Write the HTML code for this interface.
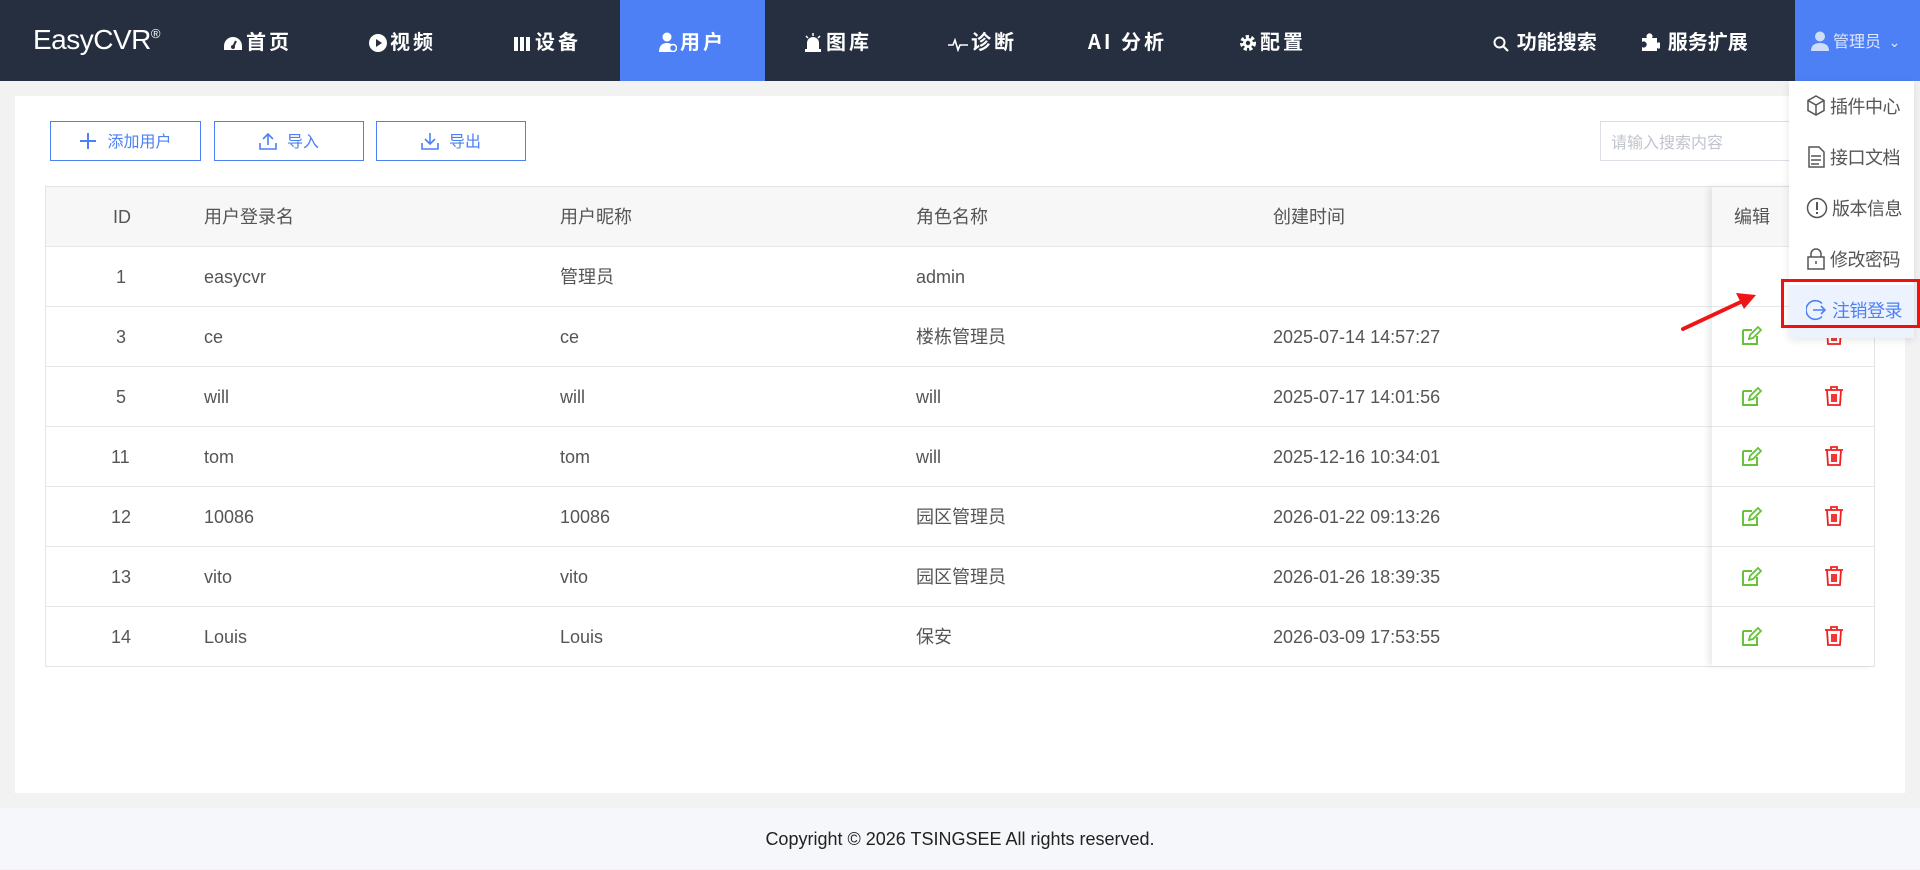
<!DOCTYPE html>
<html><head><meta charset="utf-8"><style>
*{margin:0;padding:0;box-sizing:border-box}
body{width:1920px;height:869px;overflow:hidden;background:#f2f2f2;font-family:"Liberation Sans","Noto Sans CJK SC",sans-serif;position:relative;color:#606266}
.hdr{position:absolute;left:0;top:0;width:1920px;height:81px;background:#262f3f}
.logo{position:absolute;left:33px;top:24px;color:#fff;font-size:28px;letter-spacing:-0.5px}
.logo sup{font-size:13px;vertical-align:top;position:relative;top:2px}
.tab{position:absolute;top:0;height:81px;width:145px;color:#fff;font-weight:bold;font-size:20px;line-height:81px;text-align:center;letter-spacing:3px;font-family:"Noto Sans CJK SC",sans-serif}
.tab.act{background:#4d80f5}
.tab svg{vertical-align:-3px;margin-right:3px}
.adm{position:absolute;left:1795px;top:0;width:125px;height:81px;background:#4d80f5;color:#dfe8ff;font-size:16px;line-height:81px;padding-left:16px;font-family:"Noto Sans CJK SC",sans-serif}
.panel{position:absolute;left:15px;top:96px;width:1890px;height:697px;background:#fff}
.btn{position:absolute;top:121px;height:40px;border:1.5px solid #4d80f5;color:#4d80f5;font-size:16px;line-height:37px;text-align:center;font-family:"Noto Sans CJK SC",sans-serif}
.btn svg{vertical-align:-3px;margin-right:10px}
.search{position:absolute;left:1600px;top:121px;width:300px;height:40px;border:1px solid #dcdfe6;color:#c0c4cc;font-size:16px;line-height:38px;padding-left:10px;font-family:"Noto Sans CJK SC",sans-serif}
.tbl{position:absolute;left:45px;top:186px;width:1830px;height:481px;border:1px solid #e4e4e4}
.row{position:absolute;left:0;width:1828px;height:60px;border-bottom:1px solid #e8e8e8;font-size:18px;line-height:60px;color:#555}
.row.h{background:#f7f7f7;top:0}
.row span{position:absolute;top:0}
.fix{position:absolute;left:1666px;top:0;width:162px;height:479px;background:#fff;box-shadow:-4px 0 6px rgba(0,0,0,.08)}
.fix .c{position:absolute;left:0;width:162px;height:60px;border-bottom:1px solid #e8e8e8}
.foot{position:absolute;left:0;top:808px;width:1920px;height:61px;background:#f5f7fa;text-align:center;font-size:18px;line-height:62px;color:#222}
.dd{position:absolute;left:1789px;top:81px;width:125px;height:257px;background:#fff;box-shadow:0 2px 8px rgba(0,0,0,.1)}
.it{position:absolute;left:0;width:125px;height:51px;font-size:18px;color:#555;line-height:51px;padding-left:17px;font-family:"Noto Sans CJK SC",sans-serif;white-space:nowrap;letter-spacing:-0.5px}
.it svg{vertical-align:-4px;margin-right:4px}
</style></head><body>
<div class="hdr">
<div class="logo">EasyCVR<sup>®</sup></div>
<div class="tab" style="left:185px"><svg width="20" height="16" viewBox="0 0 20 16"><path d="M10 1A9 9 0 0 0 1 10v4h18v-4A9 9 0 0 0 10 1z" fill="#fff"/><path d="M10 11l3-6" stroke="#262f3f" stroke-width="2"/><circle cx="10" cy="11" r="2" fill="#262f3f"/></svg>首页</div>
<div class="tab" style="left:330px"><svg width="18" height="18"><circle cx="9" cy="9" r="9" fill="#fff"/><path d="M7 5l6 4-6 4z" fill="#262f3f"/></svg>视频</div>
<div class="tab" style="left:475px"><svg width="18" height="16"><rect x="0" y="1" width="4" height="14" fill="#fff"/><rect x="6" y="1" width="4" height="14" fill="#fff"/><rect x="12" y="1" width="4" height="14" fill="#fff"/></svg>设备</div>
<div class="tab act" style="left:620px"><svg width="18" height="20"><circle cx="8" cy="5" r="4.5" fill="#fff"/><path d="M0 20c0-6 3-9 8-9s8 3 8 9z" fill="#fff"/><circle cx="14" cy="16" r="3.5" fill="#4d80f5" stroke="#fff" stroke-width="1.5"/></svg>用户</div>
<div class="tab" style="left:765px"><svg width="20" height="20"><path d="M4 18V11a6 6 0 0 1 12 0v7z" fill="#fff"/><rect x="2" y="17" width="16" height="3" fill="#fff"/><path d="M10 1v3M3 4l2 2M17 4l-2 2" stroke="#fff" stroke-width="1.5"/></svg>图库</div>
<div class="tab" style="left:910px"><svg width="20" height="14"><path d="M0 7h5l2-5 3 10 2-5h8" stroke="#fff" stroke-width="1.6" fill="none"/></svg>诊断</div>
<div class="tab" style="left:1055px">AI 分析</div>
<div class="tab" style="left:1200px"><svg width="18" height="18" viewBox="0 0 18 18"><circle cx="9" cy="9" r="6" fill="none" stroke="#fff" stroke-width="4" stroke-dasharray="3 2.2"/><circle cx="9" cy="9" r="5" fill="#fff"/><circle cx="9" cy="9" r="2.2" fill="#262f3f"/></svg>配置</div>
<div class="tab" style="left:1480px;width:130px;letter-spacing:0"><svg width="16" height="16"><circle cx="6.5" cy="6.5" r="5" stroke="#fff" stroke-width="2" fill="none"/><path d="M10 10l5 5" stroke="#fff" stroke-width="2.2"/></svg> 功能搜索</div>
<div class="tab" style="left:1628px;width:132px;letter-spacing:0"><svg width="20" height="20" viewBox="0 0 20 20"><path d="M2 6h5a3 3 0 1 1 5 0h5v5a3 3 0 1 1 0 5v3H2v-4a3 3 0 1 0 0-5z" fill="#fff"/></svg> 服务扩展</div>
<div class="adm"><svg width="18" height="20" style="vertical-align:-4px;margin-right:4px"><circle cx="9" cy="5.5" r="5" fill="#cfdcfc"/><path d="M0 20c0-6 4-8 9-8s9 2 9 8z" fill="#cfdcfc"/></svg>管理员 <span style="font-size:14px;margin-left:4px">&#8964;</span></div>
</div>
<div class="panel"></div>
<div class="btn" style="left:50px;width:151px"><svg width="18" height="18"><path d="M9 1v16M1 9h16" stroke="#4d80f5" stroke-width="2"/></svg>添加用户</div>
<div class="btn" style="left:214px;width:150px"><svg width="18" height="18"><path d="M9 13V2M4 7l5-5 5 5M1 11v6h16v-6" stroke="#4d80f5" stroke-width="1.6" fill="none"/></svg>导入</div>
<div class="btn" style="left:376px;width:150px"><svg width="18" height="18"><path d="M9 1v11M4 7l5 5 5-5M1 11v6h16v-6" stroke="#4d80f5" stroke-width="1.6" fill="none"/></svg>导出</div>
<div class="search">请输入搜索内容</div>
<div class="tbl">
<div class="row h" style="top:0"><span style="left:67px">ID</span><span style="left:158px">用户登录名</span><span style="left:514px">用户昵称</span><span style="left:870px">角色名称</span><span style="left:1227px">创建时间</span></div>
<div class="row" style="top:60px"><span style="left:70px">1</span><span style="left:158px">easycvr</span><span style="left:514px">管理员</span><span style="left:870px">admin</span></div>
<div class="row" style="top:120px"><span style="left:70px">3</span><span style="left:158px">ce</span><span style="left:514px">ce</span><span style="left:870px">楼栋管理员</span><span style="left:1227px">2025-07-14 14:57:27</span></div>
<div class="row" style="top:180px"><span style="left:70px">5</span><span style="left:158px">will</span><span style="left:514px">will</span><span style="left:870px">will</span><span style="left:1227px">2025-07-17 14:01:56</span></div>
<div class="row" style="top:240px"><span style="left:65px">11</span><span style="left:158px">tom</span><span style="left:514px">tom</span><span style="left:870px">will</span><span style="left:1227px">2025-12-16 10:34:01</span></div>
<div class="row" style="top:300px"><span style="left:65px">12</span><span style="left:158px">10086</span><span style="left:514px">10086</span><span style="left:870px">园区管理员</span><span style="left:1227px">2026-01-22 09:13:26</span></div>
<div class="row" style="top:360px"><span style="left:65px">13</span><span style="left:158px">vito</span><span style="left:514px">vito</span><span style="left:870px">园区管理员</span><span style="left:1227px">2026-01-26 18:39:35</span></div>
<div class="row" style="top:420px;border-bottom:none"><span style="left:65px">14</span><span style="left:158px">Louis</span><span style="left:514px">Louis</span><span style="left:870px">保安</span><span style="left:1227px">2026-03-09 17:53:55</span></div>
<div class="fix">
<div class="c" style="top:0;background:#f7f7f7;font-size:18px;line-height:60px;color:#555"><span style="position:absolute;left:22px">编辑</span></div>
<div class="c" style="top:60px"></div>
<div class="c" style="top:120px"></div>
<div class="c" style="top:180px"></div>
<div class="c" style="top:240px"></div>
<div class="c" style="top:300px"></div>
<div class="c" style="top:360px"></div>
</div>
</div>
<svg style="position:absolute;left:0;top:0" width="1920" height="869">
<defs>
<g id="ed"><path d="M2 5h9M2 5v14h14v-8" stroke="#67c23a" stroke-width="2" fill="none"/><path d="M8 14l1-4 8-8 3 3-8 8z" stroke="#67c23a" stroke-width="1.8" fill="none"/></g>
<g id="dl"><path d="M1 4h18M7 4V1h6v3M3 4l1 15h12l1-15M8 8v8M10 8v8M12 8v8" stroke="#f02020" stroke-width="1.8" fill="none"/></g>
</defs>
<use href="#ed" x="1741" y="325"/><use href="#dl" x="1824" y="325"/>
<use href="#ed" x="1741" y="386"/><use href="#dl" x="1824" y="386"/>
<use href="#ed" x="1741" y="446"/><use href="#dl" x="1824" y="446"/>
<use href="#ed" x="1741" y="506"/><use href="#dl" x="1824" y="506"/>
<use href="#ed" x="1741" y="566"/><use href="#dl" x="1824" y="566"/>
<use href="#ed" x="1741" y="626"/><use href="#dl" x="1824" y="626"/>
</svg>
<div class="dd">
<div class="it" style="top:0"><svg width="20" height="22"><path d="M10 1l8 4.5v10L10 20l-8-4.5v-10z M2 5.5l8 4.5 8-4.5M10 10v10" stroke="#555" stroke-width="1.5" fill="none"/></svg>插件中心</div>
<div class="it" style="top:51px"><svg width="20" height="22"><path d="M3 1h10l5 5v15H3z M5 10h10M5 14h10M5 18h8" stroke="#555" stroke-width="1.5" fill="none"/></svg>接口文档</div>
<div class="it" style="top:102px"><svg width="22" height="22"><circle cx="11" cy="11" r="9.5" stroke="#555" stroke-width="1.5" fill="none"/><path d="M11 5v8M11 15v2" stroke="#555" stroke-width="2"/></svg>版本信息</div>
<div class="it" style="top:153px"><svg width="20" height="22"><rect x="2" y="9" width="16" height="12" stroke="#555" stroke-width="1.5" fill="none"/><path d="M5 9V6a5 5 0 0 1 10 0v3M10 13v3" stroke="#555" stroke-width="1.5" fill="none"/></svg>修改密码</div>
<div class="it" style="top:204px;height:53px;background:#ecf3ff;color:#4d80f5"><svg width="22" height="22"><path d="M16 4.5A9.3 9.3 0 1 0 16 17.5" stroke="#4d80f5" stroke-width="1.6" fill="none"/><path d="M7 11h12M15 7l4 4-4 4" stroke="#4d80f5" stroke-width="1.6" fill="none"/></svg>注销登录</div>
</div>
<div style="position:absolute;left:1781px;top:279px;width:139px;height:49px;border:3px solid #f01010"></div>
<svg style="position:absolute;left:0;top:0" width="1920" height="869"><path d="M1683 329L1745 300" stroke="#f01515" stroke-width="4" stroke-linecap="round"/><path d="M1756 295l-20 -2 8 16z" fill="#f01515"/></svg>
<div class="foot">Copyright © 2026 TSINGSEE All rights reserved.</div>
</body></html>
